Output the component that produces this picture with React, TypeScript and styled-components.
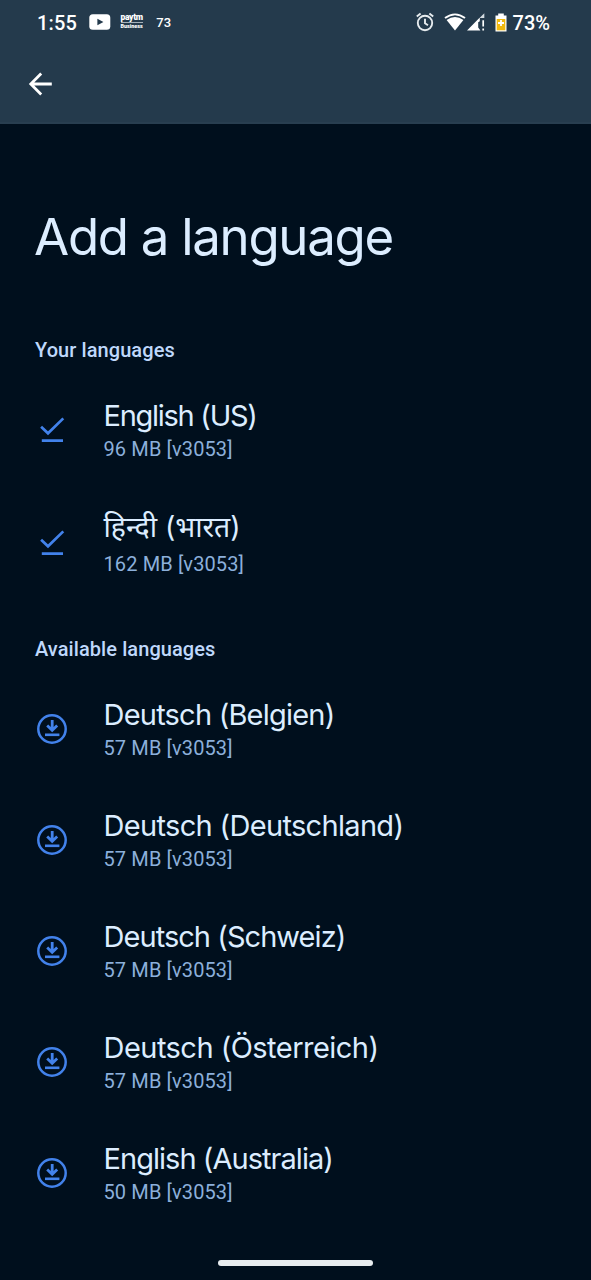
import React from "react";
import styled, { createGlobalStyle } from "styled-components";

const GlobalStyle = createGlobalStyle`
  * { box-sizing: border-box; }
  body { margin: 0; background: #000f1d; }
`;

const Screen = styled.div`
  width: 591px;
  height: 1280px;
  overflow: hidden;
  display: flex;
  flex-direction: column;
  background: #000f1d;
  font-family: Roboto, "Noto Sans", sans-serif;
`;

const Header = styled.header`
  flex: none;
  height: 124px;
  background: #243a4c;
  border-bottom: 2px solid #283e50;
  color: #fff;
`;

const StatusBar = styled.div`
  display: flex;
  align-items: center;
  justify-content: space-between;
  height: 44px;
  padding: 0 41px 0 37px;
`;

const StatusGroup = styled.div`
  display: flex;
  align-items: center;
`;

const StatusText = styled.span<{ $size: number; $spacing?: number }>`
  padding-top: 1px;
  font-size: ${(p) => p.$size}px;
  font-weight: 500;
  line-height: 24px;
  letter-spacing: ${(p) => p.$spacing ?? 0}px;
`;

const Gap = styled.span<{ $w: number }>`
  width: ${(p) => p.$w}px;
`;

const PaytmLogo = styled.div`
  display: flex;
  flex-direction: column;
  align-items: center;
  width: 23px;
  height: 18px;
`;

const PaytmName = styled.span`
  font-size: 8.5px;
  font-weight: 900;
  line-height: 8px;
  letter-spacing: -0.3px;
`;

const PaytmRule = styled.span`
  width: 22px;
  height: 1px;
  margin-top: 1px;
  background: #a5b0b9;
`;

const PaytmSub = styled.span`
  font-size: 5.4px;
  font-weight: 900;
  line-height: 7px;
`;

const Toolbar = styled.div`
  display: flex;
  align-items: center;
  height: 78px;
  padding: 1px 0 0 28px;
`;

const BackButton = styled.button`
  display: flex;
  padding: 0;
  border: 0;
  background: none;
`;

const Content = styled.main`
  flex: 1;
  padding: 79px 35px 0;
`;

const Title = styled.h1`
  margin: 0;
  height: 69px;
  font-family: Inter, sans-serif;
  font-size: 51px;
  font-weight: 400;
  line-height: 68px;
  letter-spacing: -1.3px;
  text-indent: -1px;
  white-space: nowrap;
  color: #dcedff;
`;

const SectionTitle = styled.h2<{ $top: number }>`
  margin: ${(p) => p.$top}px 0 0;
  font-size: 20px;
  font-weight: 500;
  line-height: 24px;
  letter-spacing: 0.08px;
  color: #bfd8fb;
`;

const List = styled.ul`
  margin: 12px 0 0;
  padding: 0;
  list-style: none;
`;

const Row = styled.li<{ $height: number }>`
  display: flex;
  align-items: center;
  height: ${(p) => p.$height}px;
`;

const IconSlot = styled.div`
  display: flex;
  flex: none;
  justify-content: center;
  width: 34px;
  margin-right: 34.5px;
`;

const Labels = styled.div`
  display: flex;
  flex-direction: column;
  padding-top: 2px;
`;

const Name = styled.span<{ $spacing: number; $tall?: boolean }>`
  padding-bottom: ${(p) => (p.$tall ? 4 : 0)}px;
  font-family: Inter, "Noto Sans Devanagari", "Noto Sans", sans-serif;
  font-size: ${(p) => (p.$tall ? 28.4 : 29)}px;
  line-height: 36px;
  letter-spacing: ${(p) => p.$spacing}px;
  white-space: nowrap;
  color: #dcedff;
`;

const Size = styled.span`
  font-size: 20px;
  line-height: 30px;
  letter-spacing: 0.12px;
  white-space: nowrap;
  color: #8cb0db;
`;

const Footer = styled.footer`
  display: flex;
  justify-content: center;
  flex: none;
  height: 20px;
`;

const HomeHandle = styled.div`
  width: 155px;
  height: 6px;
  border-radius: 3px;
  background: #e8edf0;
`;

const YouTubeIcon = () => (
  <svg width="22" height="16" viewBox="0 0 22 16">
    <rect x="0.3" y="0.3" width="21" height="15.4" rx="3.5" fill="#fff" />
    <path d="M8.4 4.7 L14.4 8 L8.4 11.3 Z" fill="#243a4c" />
  </svg>
);

const AlarmIcon = () => (
  <svg width="18" height="20" viewBox="0 0 18 20" fill="none" stroke="#e6ebee" strokeWidth="1.9">
    <circle cx="9" cy="11" r="7.2" />
    <path d="M9 6.8V11.3L12 13.2M0.8 4.6L4.6 1.4M17.2 4.6L13.4 1.4" />
  </svg>
);

const WifiIcon = () => (
  <svg width="22" height="18" viewBox="0 0 22 18">
    <path d="M1 5.1Q11 -2.4 21 5.1" fill="none" stroke="#fff" strokeWidth="1.9" />
    <path d="M2.6 7Q11 1 19.4 7L11 17.6Z" fill="#fff" />
  </svg>
);

const SignalIcon = () => (
  <svg width="18" height="18" viewBox="0 0 18 18">
    <path d="M0 17.5L12.8 4.6V8.2L11.2 9.2V14.6L13.4 17.5Z" fill="#fff" />
    <path d="M13 4.4L17.3 0.2V5H13Z" fill="#d3dbe1" />
    <path d="M16.2 7.3V13.6M16.2 15.4V17.5" stroke="#fff" strokeWidth="1.7" />
  </svg>
);

const BatteryIcon = () => (
  <svg width="12" height="19" viewBox="0 0 12 19">
    <path d="M3.2 0.4H8.8V2.5H11.5V18.5H0.5V2.5H3.2Z" fill="#fff" />
    <rect x="1.7" y="6" width="8.6" height="11.3" fill="#f0b90e" />
    <path d="M6 7V13M3 10H9" stroke="#fff" strokeWidth="1.8" />
  </svg>
);

const BackIcon = () => (
  <svg width="24" height="24" viewBox="0 0 24 24" fill="none" stroke="#fff" strokeWidth="2.8">
    <path d="M23.8 12H3.6M13.2 1.6L2.8 12L13.2 22.4" />
  </svg>
);

const InstalledIcon = () => (
  <svg width="26" height="26" viewBox="0 0 26 26" fill="none" stroke="#4282eb" strokeWidth="2.7">
    <path d="M2.1 9.7L9 16.3L24.3 1.4M2.8 23.7H24" />
  </svg>
);

const DownloadIcon = () => (
  <svg width="32" height="32" viewBox="0 0 32 32" fill="none" stroke="#4282eb">
    <circle cx="16" cy="16" r="13.7" strokeWidth="2.5" />
    <path d="M16.2 7V17M11.2 12.4L16.2 17.2L21.2 12.4" strokeWidth="2.8" />
    <path d="M9 21.8H23.4" strokeWidth="2.6" />
  </svg>
);

interface Language {
  name: string;
  size: string;
  spacing: number;
  tall?: boolean;
}

const installed: Language[] = [
  { name: "English (US)", size: "96 MB [v3053]", spacing: -1.27 },
  { name: "हिन्दी (भारत)", size: "162 MB [v3053]", spacing: -0.05, tall: true },
];

const available: Language[] = [
  { name: "Deutsch (Belgien)", size: "57 MB [v3053]", spacing: -0.78 },
  { name: "Deutsch (Deutschland)", size: "57 MB [v3053]", spacing: -0.67 },
  { name: "Deutsch (Schweiz)", size: "57 MB [v3053]", spacing: -0.95 },
  { name: "Deutsch (Österreich)", size: "57 MB [v3053]", spacing: -0.53 },
  { name: "English (Australia)", size: "50 MB [v3053]", spacing: -0.96 },
];

const LanguageRow = ({ language, icon }: { language: Language; icon: React.ReactNode }) => (
  <Row $height={language.tall ? 115 : 111}>
    <IconSlot>{icon}</IconSlot>
    <Labels>
      <Name $spacing={language.spacing} $tall={language.tall}>{language.name}</Name>
      <Size>{language.size}</Size>
    </Labels>
  </Row>
);

export default function App() {
  return (
    <Screen>
      <GlobalStyle />
      <Header>
        <StatusBar>
          <StatusGroup>
            <StatusText $size={20} $spacing={0.2}>1:55</StatusText>
            <Gap $w={12} />
            <YouTubeIcon />
            <Gap $w={9} />
            <PaytmLogo>
              <PaytmName>paytm</PaytmName>
              <PaytmRule />
              <PaytmSub>Business</PaytmSub>
            </PaytmLogo>
            <Gap $w={13} />
            <StatusText $size={13} $spacing={0.2}>73</StatusText>
          </StatusGroup>
          <StatusGroup>
            <AlarmIcon />
            <Gap $w={10} />
            <WifiIcon />
            <Gap $w={1} />
            <SignalIcon />
            <Gap $w={10} />
            <BatteryIcon />
            <Gap $w={6} />
            <StatusText $size={20}>73%</StatusText>
          </StatusGroup>
        </StatusBar>
        <Toolbar>
          <BackButton aria-label="Back"><BackIcon /></BackButton>
        </Toolbar>
      </Header>
      <Content>
        <Title>Add a language</Title>
        <SectionTitle $top={66}>Your languages</SectionTitle>
        <List>
          {installed.map((l) => <LanguageRow key={l.name} language={l} icon={<InstalledIcon />} />)}
        </List>
        <SectionTitle $top={37}>Available languages</SectionTitle>
        <List>
          {available.map((l) => <LanguageRow key={l.name} language={l} icon={<DownloadIcon />} />)}
        </List>
      </Content>
      <Footer><HomeHandle /></Footer>
    </Screen>
  );
}
